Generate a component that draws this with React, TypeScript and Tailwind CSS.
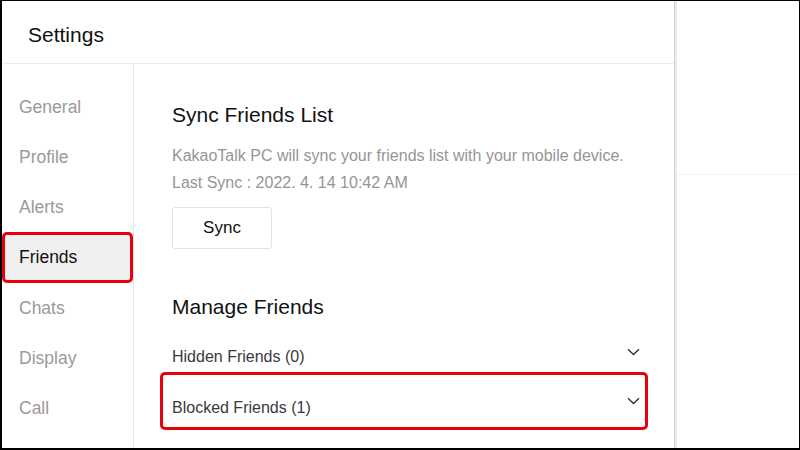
const MENU = ["General", "Profile", "Alerts", "Friends", "Chats", "Display", "Call"];

function Chevron() {
  return (
    <svg width="13" height="8" viewBox="0 0 13 8" fill="none" className="shrink-0">
      <path d="M1 1.2 L6.5 6.5 L12 1.2" stroke="#333" strokeWidth="1.4" />
    </svg>
  );
}

export default function App() {
  return (
    <div
      className="flex h-[450px] w-[800px] overflow-hidden border-t border-r border-b-2 border-l-2 border-black bg-white"
      style={{ fontFamily: '"Liberation Sans", Arial, sans-serif' }}
    >
      {/* settings window */}
      <div className="flex w-[672px] shrink-0 flex-col">
        <div className="flex h-[63px] shrink-0 items-center border-b border-[#ebebeb] pl-[26px] pt-[6px] text-[21px] text-[#111]">
          Settings
        </div>
        <div className="flex flex-1">
          <nav className="w-[132px] shrink-0 border-r border-[#e6e6e6] pt-[18px]">
            {MENU.map((item) =>
              item === "Friends" ? (
                <div
                  key={item}
                  className="flex h-[51px] items-center rounded-[5px] border-[3px] border-[#e8000b] bg-[#f0f0f0] pl-[14px] text-[17.5px] text-[#111]"
                >
                  {item}
                </div>
              ) : (
                <div key={item} className="flex h-[50px] items-center pl-[17px] text-[17.5px] text-[#9a9a9a]">
                  {item}
                </div>
              )
            )}
          </nav>
          <main className="flex-1 pl-[38px] pr-[34px] pt-[39px]">
            <h2 className="text-[21px] leading-[24px] text-[#111]">Sync Friends List</h2>
            <p className="mt-[15px] text-[16px] leading-[27px] text-[#959595]">
              KakaoTalk PC will sync your friends list with your mobile device.
            </p>
            <p className="text-[16px] leading-[27px] text-[#959595]">Last Sync : 2022. 4. 14 10:42 AM</p>
            <button className="mt-[11px] h-[42px] w-[100px] rounded-[3px] border border-[#e3e3e3] bg-white text-[17px] text-[#111]">
              Sync
            </button>
            <h2 className="mt-[46px] text-[21px] leading-[24px] text-[#111]">Manage Friends</h2>
            <div className="mt-[11px] flex h-[42px] items-center justify-between pt-[11px] text-[16px] text-[#3a3a3a]">
              <span>Hidden Friends (0)</span>
              <span className="-translate-y-[5px]">
                <Chevron />
              </span>
            </div>
            <div className="-ml-[12px] -mr-[8px] flex h-[58px] items-center justify-between rounded-[5px] border-[3px] border-[#e8000b] pl-[9px] pr-[5px] pt-[14px] text-[16px] text-[#3a3a3a]">
              <span>Blocked Friends (1)</span>
              <span className="-translate-y-[7px]">
                <Chevron />
              </span>
            </div>
          </main>
        </div>
      </div>
      {/* window edge shadow */}
      <div className="w-[1px] shrink-0 bg-[#d0d0d0]" />
      <div className="w-[2px] shrink-0 bg-[#ececec]" />
      {/* background app */}
      <div className="flex flex-1 flex-col">
        <div className="h-[174px] border-b border-[#f0f0f0]" />
      </div>
    </div>
  );
}
